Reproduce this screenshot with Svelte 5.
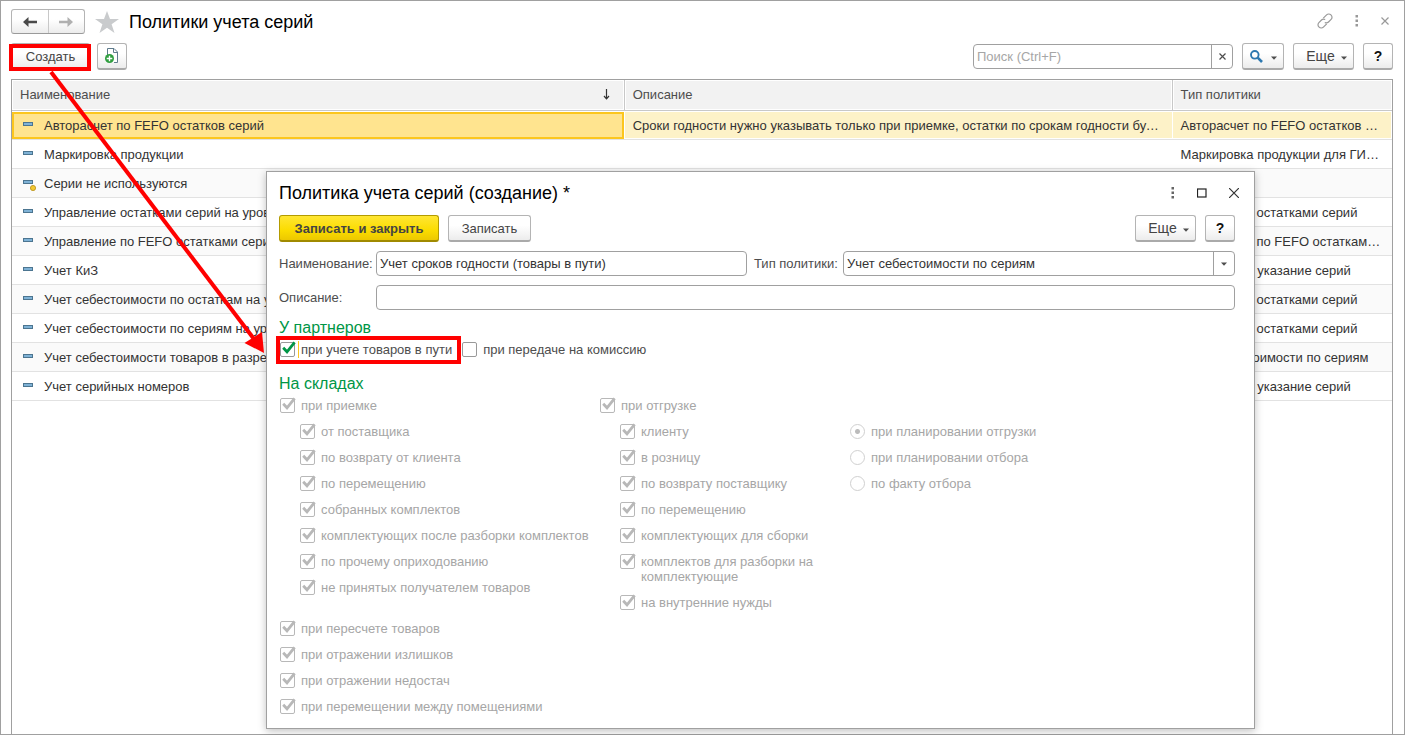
<script lang="ts">
  interface Policy {
    name: string;
    description?: string;
    type?: string;
    predefined?: boolean;
  }

  interface Option {
    label: string;
    nested?: boolean;
  }

  const policies: Policy[] = [
    {
      name: "Авторасчет по FEFO остатков серий",
      description:
        "Сроки годности нужно указывать только при приемке, остатки по срокам годности будут рассчитаны автоматически",
      type: "Авторасчет по FEFO остатков серий",
    },
    { name: "Маркировка продукции", type: "Маркировка продукции для ГИСМ" },
    { name: "Серии не используются", predefined: true },
    { name: "Управление остатками серий на уровне склада", type: "Управление остатками серий" },
    { name: "Управление по FEFO остатками серий", type: "Управление по FEFO остатками серий" },
    { name: "Учет КиЗ", type: "Справочное указание серий" },
    { name: "Учет себестоимости по остаткам на уровне склада", type: "Управление остатками серий" },
    { name: "Учет себестоимости по сериям на уровне склада", type: "Управление остатками серий" },
    { name: "Учет себестоимости товаров в разрезе серий", type: "Учет себестоимости по сериям" },
    { name: "Учет серийных номеров", type: "Справочное указание серий" },
  ];

  const receipt: Option[] = [
    { label: "при приемке" },
    { label: "от поставщика", nested: true },
    { label: "по возврату от клиента", nested: true },
    { label: "по перемещению", nested: true },
    { label: "собранных комплектов", nested: true },
    { label: "комплектующих после разборки комплектов", nested: true },
    { label: "по прочему оприходованию", nested: true },
    { label: "не принятых получателем товаров", nested: true },
  ];

  const shipment: Option[] = [
    { label: "при отгрузке" },
    { label: "клиенту", nested: true },
    { label: "в розницу", nested: true },
    { label: "по возврату поставщику", nested: true },
    { label: "по перемещению", nested: true },
    { label: "комплектующих для сборки", nested: true },
    { label: "комплектов для разборки на комплектующие", nested: true },
    { label: "на внутренние нужды", nested: true },
  ];

  const stock: Option[] = [
    { label: "при пересчете товаров" },
    { label: "при отражении излишков" },
    { label: "при отражении недостач" },
    { label: "при перемещении между помещениями" },
  ];

  const moments = ["при планировании отгрузки", "при планировании отбора", "по факту отбора"];

  let selected = $state(0);
  let inTransit = $state(true);
  let onCommission = $state(false);
  let name = $state("Учет сроков годности (товары в пути)");
</script>

{#snippet caret()}
  <svg class="caret" width="6" height="4" viewBox="0 0 6 4" aria-hidden="true">
    <path d="M0 0.5h6L3 3.8z" fill="#4d4d4d" />
  </svg>
{/snippet}

{#snippet tick()}
  <svg class="tick" width="16" height="16" viewBox="0 0 16 16" aria-hidden="true">
    <path d="M3.2 6.8L7 10.8L14.6 1.4" fill="none" stroke="currentColor" stroke-width="2.8" />
  </svg>
{/snippet}

{#snippet dots()}
  <svg width="4" height="12" viewBox="0 0 4 12" aria-hidden="true">
    <path d="M0.5 0h2.500v2.500h-2.500zM0.5 4.5h2.500v2.500h-2.500zM0.5 9h2.500v2.500h-2.500z" fill="currentColor" />
  </svg>
{/snippet}

{#snippet options(list: Option[])}
  {#each list as item}
    <label class="check disabled" class:nested={item.nested}>
      <span class="box"><input type="checkbox" checked disabled />{@render tick()}</span>
      <span>{item.label}</span>
    </label>
  {/each}
{/snippet}

<div class="window">
  <header class="titlebar">
    <div class="history">
      <button aria-label="Назад">
        <svg width="14" height="10" viewBox="0 0 14 10"><path d="M0 5L5.500 0V3.700H14V6.300H5.500V10z" fill="#4a4a4a" /></svg>
      </button>
      <button aria-label="Вперед">
        <svg width="14" height="10" viewBox="0 0 14 10"><path d="M14 5L8.500 0V3.700H0V6.300H8.500V10z" fill="#b0b0b0" /></svg>
      </button>
    </div>
    <button class="plain star" aria-label="Добавить в избранное">
      <svg width="24" height="22" viewBox="0 0 24 22"><path d="M12 0L15 8H24L16.600 13.200L19.500 22L12 16.700L4.500 22L7.400 13.200L0 8H9z" fill="#c9cbcd" /></svg>
    </button>
    <h1>Политики учета серий</h1>
    <div class="window-actions muted">
      <button class="plain" aria-label="Получить ссылку">
        <svg width="16" height="16" viewBox="0 0 16 16" fill="none" stroke="currentColor" stroke-width="1.200">
          <path d="M6.300 5.200L9.600 1.900a3 3 0 0 1 4.300 0l.2.200a3 3 0 0 1 0 4.300L11.500 9a3 3 0 0 1-3.700.4" />
          <path d="M9.700 10.800L6.400 14.100a3 3 0 0 1-4.300 0l-.2-.2a3 3 0 0 1 0-4.300L4.500 7a3 3 0 0 1 3.700-.4" />
        </svg>
      </button>
      <button class="plain" aria-label="Меню окна">{@render dots()}</button>
      <button class="plain" aria-label="Закрыть список">
        <svg width="8" height="8" viewBox="0 0 8 8"><path d="M.5.5l7 7M7.500.5l-7 7" stroke="currentColor" stroke-width="1.200" /></svg>
      </button>
    </div>
  </header>

  <div class="toolbar">
    <div class="marked create">
      <button class="btn">Создать</button>
      <span class="mark"></span>
    </div>
    <button class="btn icon" aria-label="Создать копированием">
      <svg width="14" height="16" viewBox="0 0 14 16">
        <path d="M2.500 7V.5H9L12.500 4V14.500H9" fill="#fff" stroke="#5f7b8c" />
        <path d="M8.500.5V4.500H12.500" fill="none" stroke="#5f7b8c" />
        <circle cx="4.500" cy="10.500" r="4.500" fill="#2f9e3f" />
        <path d="M4.500 7.700V13.300M1.700 10.500H7.300" stroke="#fff" stroke-width="1.400" />
      </svg>
    </button>
    <div class="search">
      <input type="text" placeholder="Поиск (Ctrl+F)" aria-label="Поиск" />
      <button aria-label="Очистить">
        <svg width="7" height="7" viewBox="0 0 7 7"><path d="M.5.5l6 6M6.500.5l-6 6" stroke="#4d4d4d" stroke-width="1.200" /></svg>
      </button>
    </div>
    <button class="btn find" aria-label="Найти">
      <svg width="13" height="13" viewBox="0 0 13 13" fill="none" stroke="#2d78b0">
        <circle cx="4.800" cy="4.800" r="3.800" stroke-width="1.900" />
        <path d="M7.700 7.700L12 12" stroke-width="2.600" />
      </svg>
      {@render caret()}
    </button>
    <button class="btn more">Еще {@render caret()}</button>
    <button class="btn help">?</button>
  </div>

  <div class="grid">
    <table>
      <thead>
        <tr>
          <th class="col-name">
            <div class="sorted">
              Наименование
              <svg width="7" height="11" viewBox="0 0 7 11"><path d="M3.500 0V9M1 7L3.500 9.800L6 7" fill="none" stroke="#333" stroke-width="1.200" /></svg>
            </div>
          </th>
          <th class="col-desc">Описание</th>
          <th>Тип политики</th>
        </tr>
      </thead>
      <tbody>
        {#each policies as policy, i}
          <tr class:selected={selected === i} onclick={() => (selected = i)}>
            <td>
              <div class="name">
                <svg width="14" height="16" viewBox="0 0 14 16" aria-hidden="true">
                  <rect x=".5" y="5.500" width="9" height="3" fill="#7fb2d6" stroke="#4c7590" />
                  {#if policy.predefined}
                    <circle cx="10" cy="13" r="2.600" fill="#f2c730" stroke="#b58e14" stroke-width=".8" />
                  {/if}
                </svg>
                <span>{policy.name}</span>
              </div>
            </td>
            <td>{policy.description ?? ""}</td>
            <td>{policy.type ?? ""}</td>
          </tr>
        {/each}
      </tbody>
    </table>
  </div>

  <div class="dialog" role="dialog" aria-labelledby="dialog-title">
    <header class="dialog-title">
      <h2 id="dialog-title">Политика учета серий (создание) *</h2>
      <div class="window-actions">
        <button class="plain" aria-label="Меню формы">{@render dots()}</button>
        <button class="plain" aria-label="Развернуть">
          <svg width="10" height="10" viewBox="0 0 10 10"><rect x=".5" y="1" width="8.500" height="8" fill="none" stroke="#222" stroke-width="1.200" /></svg>
        </button>
        <button class="plain" aria-label="Закрыть">
          <svg width="10" height="10" viewBox="0 0 10 10"><path d="M0 0l10 10M10 0L0 10" stroke="#333" stroke-width="1.200" /></svg>
        </button>
      </div>
    </header>

    <div class="commands">
      <button class="btn primary">Записать и закрыть</button>
      <button class="btn save">Записать</button>
      <button class="btn more end">Еще {@render caret()}</button>
      <button class="btn help">?</button>
    </div>

    <div class="fields">
      <label for="name">Наименование:</label>
      <div class="pair">
        <input id="name" class="field" type="text" bind:value={name} />
        <label for="type">Тип политики:</label>
        <div class="field drop">
          <select id="type">
            <option>Учет себестоимости по сериям</option>
            <option>Управление остатками серий</option>
            <option>Авторасчет по FEFO остатков серий</option>
          </select>
          <span class="drop-caret">{@render caret()}</span>
        </div>
      </div>
      <label for="description">Описание:</label>
      <input id="description" class="field" type="text" />
    </div>

    <h3>У партнеров</h3>
    <div class="partners">
      <div class="marked transit">
        <label class="check">
          <span class="box">
            <input type="checkbox" bind:checked={inTransit} />
            {#if inTransit}{@render tick()}{/if}
          </span>
          <span class="focused">при учете товаров в пути</span>
        </label>
        <span class="mark"></span>
      </div>
      <label class="check">
        <span class="box">
          <input type="checkbox" bind:checked={onCommission} />
          {#if onCommission}{@render tick()}{/if}
        </span>
        <span>при передаче на комиссию</span>
      </label>
    </div>

    <h3>На складах</h3>
    <div class="warehouse">
      <div>{@render options(receipt)}</div>
      <div>{@render options(shipment)}</div>
      <div class="moments">
        {#each moments as moment, i}
          <label class="check disabled">
            <span class="box"><input type="radio" name="moment" checked={i === 0} disabled /></span>
            <span>{moment}</span>
          </label>
        {/each}
      </div>
    </div>
    <div>{@render options(stock)}</div>
  </div>

  <svg class="pointer" width="270" height="360" viewBox="0 0 270 360" aria-hidden="true">
    <path d="M50 71L253 338" stroke="#f00" stroke-width="4" />
    <path d="M263 352L243.500 342L261 331z" fill="#f00" />
  </svg>
</div>

<style>
  :global(body) {
    background: #fff;
  }
  .window {
    position: relative;
    display: flex;
    flex-direction: column;
    min-height: 100vh;
    padding: 8px 11px 0 10px;
    box-sizing: border-box;
    border: 1px solid #a0a0a0;
    color: #333;
    font: 13px/15px "Liberation Sans", Arial, sans-serif;
  }
  .window *,
  .window *::before {
    box-sizing: border-box;
  }
  button,
  input,
  select {
    margin: 0;
    color: inherit;
    font: inherit;
  }
  svg {
    display: block;
    flex: none;
  }
  h1,
  h2 {
    margin: 0;
    color: #000;
    font-size: 18px;
    font-weight: 400;
    line-height: 24px;
  }
  h3 {
    margin: 0;
    color: #009646;
    font-size: 16px;
    font-weight: 400;
    line-height: 18px;
  }

  /* title bar */
  .titlebar {
    display: flex;
    align-items: center;
    height: 25px;
  }
  .history {
    display: flex;
    width: 74px;
    height: 25px;
    border: 1px solid #b4b4b4;
    border-bottom-color: #9a9a9a;
    border-radius: 3px;
    background: linear-gradient(#fff 40%, #ececec);
  }
  .history button {
    display: flex;
    flex: 1;
    align-items: center;
    justify-content: center;
    padding: 0;
    border: 0;
    background: none;
  }
  .history button + button {
    border-left: 1px solid #c8c8c8;
  }
  .plain {
    display: flex;
    padding: 0;
    border: 0;
    background: none;
  }
  .star {
    margin: 0 10px;
  }
  .window-actions {
    display: flex;
    align-items: center;
    gap: 22px;
    margin-left: auto;
    color: #666;
  }
  .muted {
    padding: 0 4px 2px 0;
    color: #999;
  }

  /* buttons */
  .toolbar,
  .commands {
    display: flex;
    align-items: center;
    gap: 9px;
  }
  .toolbar {
    margin: 9px 0;
  }
  .btn {
    display: flex;
    align-items: center;
    justify-content: center;
    height: 27px;
    padding: 0;
    border: 1px solid #b4b4b4;
    border-bottom: 2px solid #aaa;
    border-radius: 3px;
    background: linear-gradient(#fff 40%, #ececec);
    color: #444;
  }
  .icon,
  .help {
    width: 30px;
  }
  .help {
    color: #111;
    font-size: 14px;
    font-weight: 700;
  }
  .find {
    gap: 8px;
    width: 42px;
  }
  .more {
    gap: 6px;
    width: 61px;
    padding-left: 6px;
    font-size: 14px;
  }
  .btn .caret {
    margin-top: 3px;
  }
  .end {
    margin-left: auto;
  }
  .marked {
    position: relative;
  }
  .mark {
    position: absolute;
    border: 4px solid #f00;
    pointer-events: none;
  }
  .create {
    margin-right: -2px;
  }
  .create .btn {
    width: 79px;
  }
  .create .mark {
    inset: 1px -1px -1px -2px;
  }
  .search {
    display: flex;
    width: 260px;
    height: 25px;
    margin-left: auto;
    border: 1px solid #a0a0a0;
    border-radius: 4px;
  }
  .search input {
    flex: 1;
    min-width: 0;
    padding: 0 3px;
    border: 0;
    background: none;
  }
  .search input::placeholder {
    color: #a6a6a6;
  }
  .search button {
    display: flex;
    align-items: center;
    justify-content: center;
    width: 21px;
    padding: 0;
    border: 0;
    border-left: 1px solid #a0a0a0;
    background: none;
  }

  /* list */
  .grid {
    flex: 1;
    border: 1px solid #a0a0a0;
    border-bottom: 0;
  }
  table {
    width: 100%;
    border-collapse: separate;
    border-spacing: 0;
    table-layout: fixed;
  }
  .col-name {
    width: 44.4%;
  }
  .col-desc {
    width: 39.7%;
  }
  th {
    height: 31px;
    padding: 0 8px 2px;
    border-right: 1px solid #c8c8c8;
    border-bottom: 1px solid #c8c8c8;
    background: #f2f2f2;
    box-shadow: inset 0 0 0 1px #fff;
    color: #4d4d4d;
    font-weight: 400;
    text-align: left;
  }
  th:last-child {
    border-right: 0;
  }
  .sorted {
    display: flex;
    align-items: center;
    justify-content: space-between;
    padding-right: 6px;
  }
  td {
    height: 29px;
    padding: 0 10px 0 8px;
    border-bottom: 1px solid #e2e2e2;
    overflow: hidden;
    text-overflow: ellipsis;
    white-space: nowrap;
  }
  tbody tr:nth-child(odd) td {
    background: #fafafa;
  }
  .name {
    display: flex;
    align-items: center;
    gap: 7px;
    padding-left: 3px;
  }
  tbody tr.selected td {
    background: #fdf2c8;
    box-shadow: inset 0 1px #fff, inset -1px -1px #fff;
  }
  tbody tr.selected td:first-child {
    background: #ffe48f;
    box-shadow:
      inset -1px 1px #fff,
      inset -3px 3px #fcc61e,
      inset 2px -2px #fcc61e;
  }

  /* form */
  .dialog {
    position: absolute;
    top: 170px;
    right: 149px;
    left: 265px;
    padding: 8px 19px 8px 12px;
    border: 1px solid #a0a0a0;
    background: #fff;
    box-shadow: 0 2px 8px rgba(0, 0, 0, 0.25);
  }
  .dialog-title {
    display: flex;
    align-items: center;
    height: 26px;
    margin: 0 -4px 9px 0;
  }
  .primary {
    width: 160px;
    border-color: #b39b00;
    border-bottom-color: #a08a00;
    background: linear-gradient(#ffe633, #fbdc00 60%, #ecc800);
    font-weight: 700;
  }
  .save {
    width: 83px;
  }
  .fields {
    display: grid;
    grid-template-columns: 93px 1fr;
    gap: 9px 4px;
    align-items: center;
    margin: 9px 0;
    color: #4d4d4d;
    white-space: nowrap;
  }
  .pair {
    display: grid;
    grid-template-columns: 371fr 82px 392fr;
    align-items: center;
    column-gap: 7px;
  }
  .pair label {
    text-align: right;
  }
  .field {
    width: 100%;
    height: 25px;
    padding: 0 3px;
    border: 1px solid #a0a0a0;
    border-radius: 4px;
    background: #fff;
    color: #333;
  }
  .drop {
    display: flex;
    padding: 0;
  }
  .drop select {
    flex: 1;
    min-width: 0;
    padding: 0 3px;
    border: 0;
    background: none;
    appearance: none;
  }
  .drop-caret {
    display: flex;
    align-items: center;
    justify-content: center;
    width: 21px;
    border-left: 1px solid #a0a0a0;
    pointer-events: none;
  }
  .partners {
    display: flex;
    gap: 9px;
    margin-bottom: 12px;
  }
  .check {
    display: flex;
    gap: 6px;
    padding: 5px 0 6px;
    color: #4d4d4d;
  }
  .check.disabled {
    color: #a6a6a6;
  }
  .nested {
    padding-left: 20px;
  }
  .box {
    position: relative;
    flex: none;
    width: 16px;
    height: 15px;
    padding-left: 1px;
    color: #009646;
  }
  .disabled .box {
    color: #b8b8b8;
  }
  .box input {
    display: block;
    width: 15px;
    height: 15px;
    border: 1px solid #999;
    border-radius: 2px;
    background: #fff;
    appearance: none;
  }
  .disabled .box input {
    border-color: #b8b8b8;
  }
  .box input[type="radio"] {
    border-color: #d0d0d0;
    border-radius: 50%;
  }
  .box input[type="radio"]:checked {
    background: radial-gradient(circle, #bbb 2px, #fff 3px);
  }
  .tick {
    position: absolute;
    top: -1px;
    left: 1px;
    pointer-events: none;
  }
  .transit .mark {
    inset: -1px -9px -1px -3px;
  }
  .focused {
    position: relative;
  }
  .focused::before {
    position: absolute;
    top: -1px;
    bottom: -1px;
    left: -3px;
    border-left: 1px solid #fcc61e;
    content: "";
  }
  .warehouse {
    display: grid;
    grid-template-columns: 320px 250px 1fr;
  }
  .warehouse > div:nth-child(2) {
    padding-right: 20px;
  }
  .moments {
    padding-top: 26px;
  }
  .pointer {
    position: absolute;
    top: 0;
    left: 0;
    pointer-events: none;
  }
</style>
